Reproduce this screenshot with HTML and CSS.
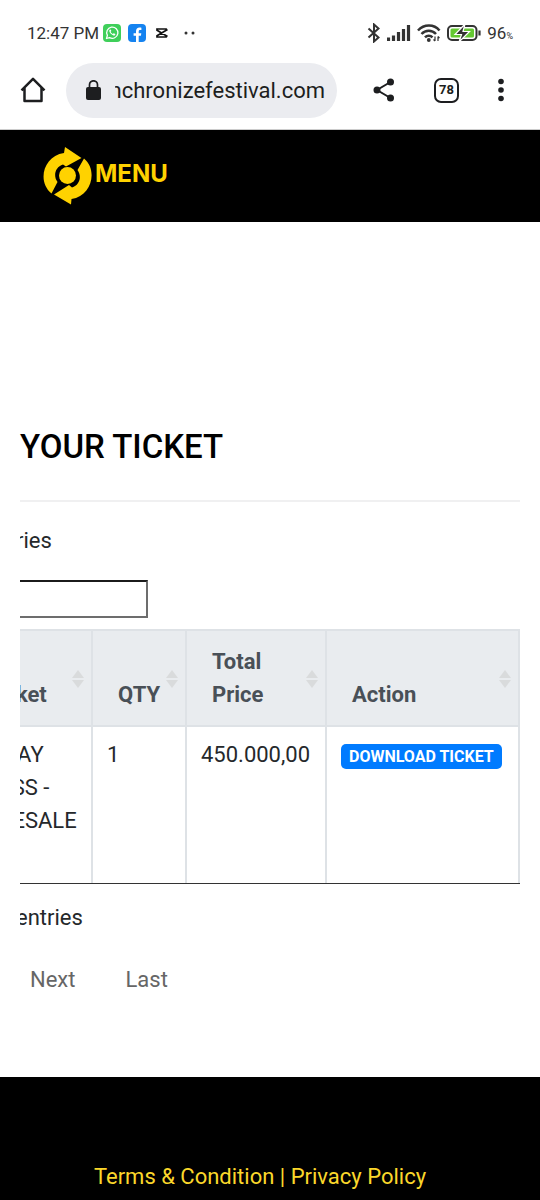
FILE: index.html
```html
<!DOCTYPE html>
<html lang="en">
<head>
<meta charset="utf-8">
<meta name="viewport" content="width=device-width, initial-scale=1">
<title>Your Ticket</title>
<link rel="stylesheet" href="styles.css">
</head>
<body>
<div class="status-bar">
  <span class="clock">12:47 PM</span>
  <div class="notifications">
    <svg width="18" height="18" viewBox="0 0 18 18" aria-hidden="true"><rect width="18" height="18" rx="4" fill="#3fcf5a"/><path d="M3.500 14.500l.9-3.100a5.600 5.600 0 1 1 2.200 2.200z" fill="none" stroke="#fff" stroke-width="1.300" stroke-linejoin="round"/><path d="M6.600 5.800c-.9 1 .1 3 1.500 4.300 1.500 1.400 3.200 2 4 1l.3-1-1.700-.9-.9.8c-1-.4-1.800-1.200-2.200-2.200l.7-.8-.6-1.500z" fill="#fff"/></svg>
    <svg width="18" height="18" viewBox="0 0 18 18" aria-hidden="true"><rect width="18" height="18" rx="4" fill="#1583f0"/><path d="M8 18v-6.200H5.600V9.200H8V7.300c0-2.500 1.400-3.800 3.500-3.800.9 0 1.500.1 1.900.2v2.200h-1.200c-1.200 0-1.500.7-1.500 1.500v1.800h2.600l-.4 2.600h-2.200V18z" fill="#fff"/></svg>
    <svg class="capcut" width="13" height="10" viewBox="0 0 13 10" aria-hidden="true"><path d="M11 2V1H2v1.200L12.500 8.500M11 8v1H2V7.800L12.500 1.500" fill="none" stroke="#111" stroke-width="1.700"/></svg>
    <svg class="more-notifications" width="12" height="4" viewBox="0 0 12 4" aria-hidden="true"><circle cx="2" cy="2" r="1.500" fill="#333"/><circle cx="9" cy="2" r="1.500" fill="#333"/></svg>
  </div>
  <div class="indicators">
    <svg width="14" height="20" viewBox="0 0 14 20" aria-hidden="true"><path d="M1.500 5.500l10 9L7 18.500v-17l4.500 4-10 9" fill="none" stroke="#333" stroke-width="2"/></svg>
    <svg width="24" height="16" viewBox="0 0 24 16" aria-hidden="true"><path d="M1.500 12.500V16M6.500 10.500V16M11.500 7v9M16.500 4v12M21.500 0v16" stroke="#333" stroke-width="3.200"/></svg>
    <svg width="24" height="18" viewBox="0 0 24 18" aria-hidden="true"><path d="M1 6.500C7-.2 17-.2 22.500 6.500M4.500 10c4-4.300 10.500-4.300 14.500 0M8 13.300c2-2.200 5.500-2.200 7.500 0" fill="none" stroke="#333" stroke-width="2.500"/><circle cx="11.800" cy="16" r="1.900" fill="#333"/><path d="M18 12.500V17M21 12.500V17M16.500 15.500L18 17M22.500 14L21 12.500" stroke="#333" stroke-width="1.200"/></svg>
    <svg width="34" height="18" viewBox="0 0 34 18" aria-hidden="true"><rect x="1" y="2" width="28.500" height="14" rx="4" fill="#fff" stroke="#333" stroke-width="2"/><rect x="3.500" y="4.500" width="23.500" height="9" rx="1.500" fill="#64c832"/><path d="M32.500 6.500v5" stroke="#333" stroke-width="2.200"/><path d="M18 0L8 10.500h6.500L12 18 22.500 7.500H16z" fill="#333" stroke="#fff" stroke-width="1.200"/></svg>
    <span class="battery">96<small>%</small></span>
  </div>
</div>

<div class="browser-bar">
  <button class="icon-button" type="button" aria-label="Home"><svg width="26" height="26" viewBox="0 0 26 26"><path d="M1.500 13.300L13 1.800l11.500 11.500M4.500 11v13h17V11" fill="none" stroke="#1d1e20" stroke-width="2.500" stroke-linejoin="round"/></svg></button>
  <div class="address">
    <svg width="15" height="20" viewBox="0 0 15 20" aria-hidden="true"><rect y="7" width="15" height="13" rx="2" fill="#1d1e20"/><path d="M3.500 8V4.800a4 4 0 0 1 8 0V8" fill="none" stroke="#1d1e20" stroke-width="1.700"/></svg>
    <span class="url"><span>synchronizefestival.com</span></span>
  </div>
  <div class="browser-actions">
    <button class="icon-button" type="button" aria-label="Share"><svg width="22" height="24" viewBox="0 0 22 24"><path d="M17.500 4L4 12l13.500 8" fill="none" stroke="#1d1e20" stroke-width="2"/><g fill="#1d1e20"><circle cx="17.500" cy="4" r="3.500"/><circle cx="4" cy="12" r="3.500"/><circle cx="17.500" cy="20" r="3.500"/></g></svg></button>
    <button class="tab-count" type="button" aria-label="78 open tabs">78</button>
    <button class="icon-button" type="button" aria-label="More options"><svg width="6" height="24" viewBox="0 0 6 24"><g fill="#1d1e20"><circle cx="3" cy="3.500" r="2.800"/><circle cx="3" cy="12" r="2.800"/><circle cx="3" cy="20.500" r="2.800"/></g></svg></button>
  </div>
</div>

<header class="site-header">
  <a class="brand" href="#">
    <svg width="50" height="60" viewBox="0 0 50 60" aria-hidden="true"><g fill="#ffd200"><path d="M22 1L38.500 12 23 20.500 20 18.500C12 21 10 30 14.500 36L8.500 47.500C-6 36 0 10 21 7z"/><path d="M28 58.500L11 48.500 26 39l3 2.500c8-2.500 10-11.500 5.500-17.500L41 12.500C55 24 49 50 28.500 53z"/><circle cx="24.500" cy="29.500" r="8.500"/></g></svg>
    <span>MENU</span>
  </a>
</header>

<main class="page">
  <h1 class="page-title">YOUR TICKET</h1>
  <div class="list-area">
    <div class="length">entries</div>
    <input class="search" type="search" aria-label="Search">
    <table class="tickets">
      <thead>
        <tr>
          <th class="col-ticket">Ticket<span class="sort"></span></th>
          <th class="col-qty">QTY<span class="sort"></span></th>
          <th class="col-price">Total Price<span class="sort"></span></th>
          <th>Action<span class="sort"></span></th>
        </tr>
      </thead>
      <tbody>
        <tr>
          <td>1 DAY PASS - PRESALE</td>
          <td>1</td>
          <td>450.000,00</td>
          <td><a class="download" href="#">DOWNLOAD TICKET</a></td>
        </tr>
      </tbody>
    </table>
    <div class="info">entries</div>
    <nav class="pager" aria-label="Ticket pages">
      <a href="#">Next</a>
      <a href="#">Last</a>
    </nav>
  </div>
</main>

<footer class="site-footer">
  <a href="#">Terms &amp; Condition</a> | <a href="#">Privacy Policy</a>
</footer>
</body>
</html>
```

FILE: styles.css
```css
* { box-sizing: border-box; }

body {
  margin: 0;
  background: #fff;
  color: #25282b;
  font: 22px/33px Roboto, "Liberation Sans", sans-serif;
}

a { color: inherit; text-decoration: none; }
svg { display: block; flex: none; }

.status-bar {
  display: flex;
  align-items: center;
  height: 62px;
  padding: 4px 27px 0;
  color: #333;
  font-size: 17px;
  line-height: 24px;
}
.notifications {
  display: flex;
  align-items: center;
  gap: 7px;
  margin-left: 4px;
}
.capcut { margin-left: 2px; }
.more-notifications { margin-left: 9px; }
.indicators {
  display: flex;
  align-items: center;
  gap: 6px;
  margin-left: auto;
}
.battery small { font-size: 9px; line-height: 1; }

.browser-bar {
  display: flex;
  align-items: center;
  height: 68px;
  padding: 0 36px 11px 20px;
  border-bottom: 1px solid #ccc;
}
.icon-button {
  padding: 0;
  border: 0;
  background: none;
  color: #1d1e20;
}
.address {
  display: flex;
  flex: 1;
  align-items: center;
  gap: 14px;
  min-width: 0;
  height: 55px;
  margin: 0 36px 0 20px;
  padding: 0 12px 0 20px;
  border-radius: 28px;
  background: #ebecf0;
  color: #1d1e20;
}
.url {
  display: flex;
  flex: 1;
  justify-content: flex-end;
  min-width: 0;
  overflow: hidden;
  white-space: nowrap;
}
.browser-actions {
  display: flex;
  align-items: center;
  gap: 39px;
}
.tab-count {
  width: 25px;
  height: 25px;
  padding: 0;
  border: 2px solid #1d1e20;
  border-radius: 7px;
  background: none;
  color: #1d1e20;
  font: 700 13px/20px Roboto, sans-serif;
}

.site-header {
  display: flex;
  align-items: center;
  height: 92px;
  padding: 0 43px;
  background: #000;
}
.brand {
  display: flex;
  align-items: center;
  gap: 2px;
  color: #ffd200;
  font: 700 24px/32px Inter, sans-serif;
}
.brand span { padding-bottom: 4px; }

.page { padding: 205px 20px 81px; }
.page-title {
  margin: 0;
  padding-bottom: 33px;
  border-bottom: 2px solid #f0f0f1;
  color: #000;
  font-size: 33px;
  font-weight: 500;
  line-height: 40px;
}
.list-area {
  padding-top: 22px;
  overflow: hidden;
}
.length { margin-left: -35px; }
.search {
  display: block;
  width: 188px;
  height: 38px;
  margin: 23px 0 11px -60px;
  border: 2px solid #6d6d6d;
  border-top-color: #1b1b1b;
  border-radius: 0;
  outline: 0;
  background: #fff;
  font: inherit;
  appearance: none;
}

.tickets {
  width: calc(100% + 53px);
  margin-left: -53px;
  border: 2px solid #dee2e6;
  border-width: 1px 0 0 2px;
  border-bottom: 1px solid #333;
  border-collapse: separate;
  border-spacing: 0;
  table-layout: fixed;
}
.tickets th,
.tickets td {
  border-right: 2px solid #dee2e6;
  text-align: left;
}
.tickets th {
  position: relative;
  height: 97px;
  padding: 14px 25px;
  border-top: 1px solid #dee2e6;
  border-bottom: 2px solid #dee2e6;
  background: #e9ecef;
  color: #495057;
  font-weight: 700;
  vertical-align: bottom;
}
.tickets td {
  height: 156px;
  padding: 11px 14px;
  vertical-align: top;
}
.tickets .col-ticket { width: 124px; padding-left: 16px; }
.tickets td:first-child { padding-left: 16px; }
.col-qty { width: 94px; }
.col-price { width: 140px; }
.sort {
  position: absolute;
  top: 39px;
  right: 7px;
  display: grid;
  gap: 2px;
}
.sort::before,
.sort::after {
  content: "";
  border: 6px solid transparent;
}
.sort::before { border-top: 0; border-bottom: 8px solid #d9dbdc; }
.sort::after { border-bottom: 0; border-top: 8px solid #d9dbdc; }

.download {
  display: inline-block;
  padding: 0 8px;
  border-radius: 5px;
  background: #007bff;
  color: #fff;
  font-size: 16px;
  font-weight: 700;
  line-height: 25px;
  white-space: nowrap;
}

.info { margin: 17px 0 29px -4px; }
.pager {
  display: flex;
  gap: 50px;
  padding-left: 10px;
  color: #666;
}

.site-footer {
  padding: 83px 40px 7px 20px;
  background: #000;
  color: #fbd72b;
  text-align: center;
}
```
